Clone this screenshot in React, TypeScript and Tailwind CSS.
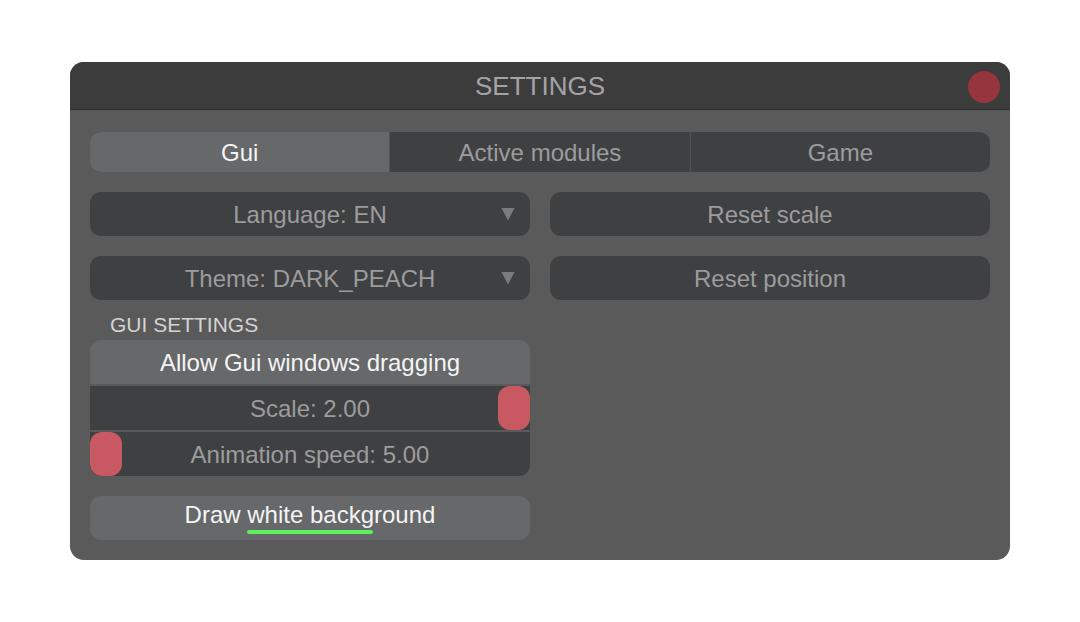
const font = { fontFamily: '"Liberation Sans", Arial, sans-serif' };

function Caret() {
  return (
    <svg width="14" height="14" viewBox="0 0 14 14" className="absolute right-[15px] top-[15px]">
      <polygon points="0.5,1 13.5,1 7,13.5" fill="#7c7c7e" />
    </svg>
  );
}

function Dropdown({ label }: { label: string }) {
  return (
    <div className="relative h-[44px] rounded-[11px] bg-[#3f4042] flex items-center justify-center pt-[2px] text-[24px] text-[#9c9c9e]">
      {label}
      <Caret />
    </div>
  );
}

function Button({ label }: { label: string }) {
  return (
    <div className="h-[44px] rounded-[11px] bg-[#3f4042] flex items-center justify-center pt-[2px] text-[24px] text-[#9c9c9e]">
      {label}
    </div>
  );
}

function Slider({ label, value }: { label: string; value: number }) {
  return (
    <div className="relative h-[44px] bg-[#3f4042] flex items-center justify-center pt-[2px] text-[24px] text-[#9c9c9e]">
      {label}
      <div
        className="absolute top-0 h-[44px] w-[32px] rounded-[12px] bg-[#c85862]"
        style={{ left: `calc(${value * 100}% - ${value * 32}px)` }}
      />
    </div>
  );
}

export default function App() {
  const tabs = ['Gui', 'Active modules', 'Game'];
  const active = 0;

  return (
    <div className="h-[622px] w-[1080px] bg-white flex items-center justify-center" style={font}>
      <div className="w-[940px] rounded-[14px] bg-[#5a5a5a] overflow-hidden">
        <div className="relative h-[48px] bg-[#3c3c3c] flex items-center justify-center pt-[2px] text-[26px] text-[#a4a4a6] border-b border-[#2c2c2c]">
          SETTINGS
          <div className="absolute right-[10px] top-[9px] w-[32px] h-[32px] rounded-full bg-[#97353f]" />
        </div>

        <div className="px-[20px] pt-[22px] pb-[20px]">
          <div className="flex h-[40px] rounded-[10px] overflow-hidden bg-[#3f4042]">
            {tabs.map((t, i) => (
              <div
                key={t}
                className={`flex-1 flex items-center justify-center pt-[2px] text-[24px] ${i > 0 ? 'border-l border-[#535355]' : ''} ${i === active ? 'bg-[#67686a] text-[#f4f4f4]' : 'text-[#9c9c9e]'}`}
              >
                {t}
              </div>
            ))}
          </div>

          <div className="grid grid-cols-2 gap-x-[20px] gap-y-[20px] mt-[20px]">
            <Dropdown label="Language: EN" />
            <Button label="Reset scale" />
            <Dropdown label="Theme: DARK_PEACH" />
            <Button label="Reset position" />
          </div>

          <div className="w-[440px]">
            <div className="h-[40px] pl-[20px] pt-[13px] text-[21px] leading-[24px] text-[#d4d4d4]">GUI SETTINGS</div>
            <div className="rounded-[11px] overflow-hidden flex flex-col gap-[2px]">
              <div className="h-[44px] bg-[#67686a] flex items-center justify-center pt-[2px] text-[24px] text-[#f4f4f4]">
                Allow Gui windows dragging
              </div>
              <Slider label="Scale: 2.00" value={1} />
              <Slider label="Animation speed: 5.00" value={0} />
            </div>

            <div className="mt-[20px] h-[44px] rounded-[11px] bg-[#67686a] flex items-center justify-center pb-[6px] text-[24px] text-[#f4f4f4]">
              <span>
                Draw{' '}
                <span className="relative">
                  white background
                  <span className="absolute left-0 w-[126px] bottom-[-6px] h-[4px] rounded-full bg-[#5cf05c]" />
                </span>
              </span>
            </div>
          </div>
        </div>
      </div>
    </div>
  );
}
